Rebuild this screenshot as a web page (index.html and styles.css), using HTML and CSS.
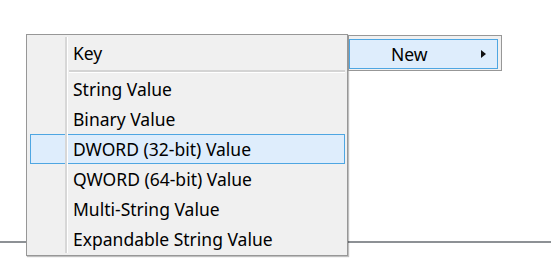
FILE: index.html
```html
<!DOCTYPE html>
<html lang="en">
<head>
  <meta charset="UTF-8" />
  <title>New value menu</title>
  <link rel="stylesheet" href="styles.css">
</head>
<body>

  <div class="page">
    <!-- the pane border behind the menus -->
    <div class="pane-line"></div>

    <!-- context menu -->
    <div class="menu main-menu">
      <div class="menu-item">Key</div>
      <div class="menu-sep"></div>
      <div class="menu-item">String Value</div>
      <div class="menu-item">Binary Value</div>
      <div class="menu-item active">DWORD (32-bit) Value</div>
      <div class="menu-item">QWORD (64-bit) Value</div>
      <div class="menu-item">Multi-String Value</div>
      <div class="menu-item">Expandable String Value</div>
    </div>

    <!-- parent item -->
    <div class="menu sub-menu">
      <div class="menu-item active new-item">
        <span>New</span>
        <span class="arrow"></span>
      </div>
    </div>
  </div>

</body>
</html>
```

FILE: styles.css
```css
* {
  margin: 0;
  padding: 0;
  box-sizing: border-box;
}

body {
  font-family: "Noto Sans", "Open Sans", sans-serif;
  font-size: 17.5px;
  color: #000;
  background: #fff;
  overflow: hidden;
}

.page {
  position: relative;
  width: 551px;
  height: 261px;
  padding-top: 241px;
}

.pane-line {
  height: 2px;
  background: #8d9195;
}

.menu {
  position: absolute;
  background: #f0f0f0;
  border: 1px solid #979797;
  box-shadow: 1px 1px 1px rgba(0, 0, 0, 0.25);
}

.main-menu {
  left: 26px;
  top: 34px;
  width: 322px;
  height: 222px;
  padding: 3px 2px 0 3px;
}

/* icon gutter line */
.main-menu::before {
  content: "";
  position: absolute;
  left: 38px;
  top: 2px;
  bottom: 2px;
  width: 2px;
  background: #d7d7d7;
  border-right: 1px solid #fff;
}

.menu-item {
  height: 30px;
  line-height: 29px;
  padding-left: 42px;
  border: 1px solid transparent;
  white-space: nowrap;
}

.menu-item.active {
  background: #deedfc;
  border-color: #4ea6e2;
}

.menu-sep {
  height: 6px;
  margin-left: 39px;
  padding-top: 2px;
}

.menu-sep::after {
  content: "";
  display: block;
  height: 2px;
  background: #d4d4d4;
  border-bottom: 1px solid #fff;
}

.sub-menu {
  left: 348px;
  top: 35px;
  width: 154px;
  height: 36px;
  padding: 3px 3px 0 0;
  box-shadow: none;
}

.new-item {
  display: flex;
  align-items: center;
  padding-left: 41px;
  padding-right: 11px;
  justify-content: space-between;
}

.arrow {
  width: 0;
  height: 0;
  border-top: 4.5px solid transparent;
  border-bottom: 4.5px solid transparent;
  border-left: 5px solid #111;
}
```
